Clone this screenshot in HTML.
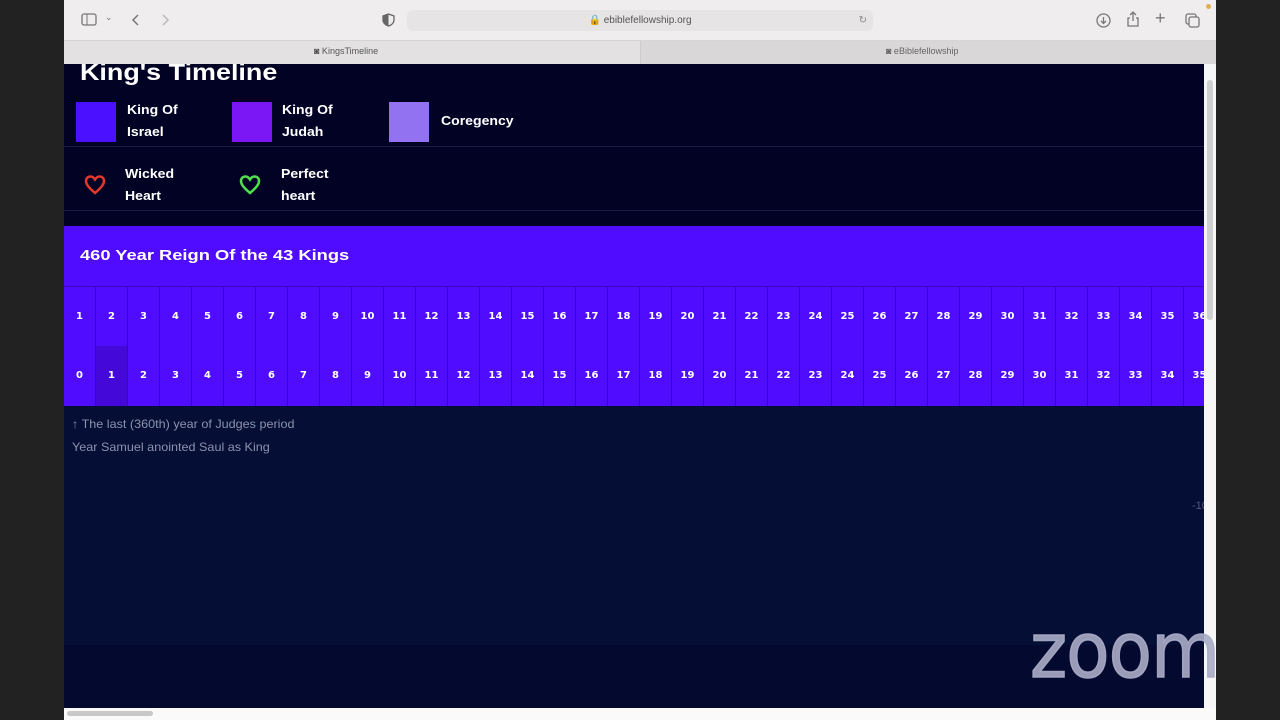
<!DOCTYPE html>
<html><head><meta charset="utf-8"><style>
*{margin:0;padding:0;box-sizing:border-box}
body{width:1280px;height:720px;background:#222;position:relative;overflow:hidden;font-family:"Liberation Sans",sans-serif}
.win{position:absolute;left:64px;top:0;width:1152px;height:720px;background:#f3f1f1}
.toolbar{position:absolute;left:0;top:0;width:1152px;height:40px;background:#efeded}
.tabs{position:absolute;left:0;top:40px;width:1152px;height:24px;background:#e3e1e2;border-top:1px solid #d6d4d4}
.tab2{position:absolute;left:576px;top:0;width:576px;height:24px;background:#d9d7d8;border-left:1px solid #ccc}
.url{position:absolute;left:343px;top:10px;width:466px;height:21px;background:#e6e4e4;border-radius:6px;font-size:10px;color:#555;text-align:center;line-height:21px}
.content{position:absolute;left:0;top:64px;width:1140px;height:644px;background:#020324;overflow:hidden}
.sb{position:absolute;left:1140px;top:64px;width:12px;height:644px;background:#f6f6f6}
.sb i{position:absolute;left:3px;top:16px;width:6px;height:240px;background:#cfcfcf;border-radius:3px}
.bot{position:absolute;left:0;top:708px;width:1152px;height:12px;background:#fafafa}
.bot i{position:absolute;left:3px;top:3px;width:86px;height:5px;background:#c8c8c8;border-radius:3px}
.w{color:#fff;font-weight:bold;position:absolute;transform-origin:0 0}
.sq{position:absolute;width:40px;height:40px}
.lab{position:absolute;color:#fff;font-size:13px;font-weight:bold;line-height:22px;transform:scaleX(1.08);transform-origin:0 0}
.band{position:absolute;left:0;top:162px;width:1140px;height:60px;background:#4f0cff}
.row{position:absolute;left:0;width:1160px;height:60px;display:flex;background:#4f0cff}
.row div{width:32px;flex:none;height:60px;border-right:1px solid #3a08b8;color:#fff;font-size:10px;font-weight:bold;text-align:center;line-height:60px;font-family:"DejaVu Sans",sans-serif}
.lower{position:absolute;left:0;top:342px;width:1140px;height:302px;background:#050e35}
.lower2{position:absolute;left:0;top:581px;width:1140px;height:63px;background:#040930}
.note{position:absolute;left:8px;color:#8c92ad;font-size:12px;transform:scaleX(1.05);transform-origin:0 0}
.zoom{position:absolute;left:1030px;top:613px;color:rgba(170,172,198,0.9);font-size:77px;letter-spacing:-1px;line-height:77px;font-family:"DejaVu Sans",sans-serif;transform:scaleX(0.92);transform-origin:0 0;-webkit-text-stroke:1.5px rgba(170,172,198,0.9)}
</style></head><body>
<div class="win">
<div class="toolbar">
<svg style="position:absolute;left:17px;top:13px" width="16" height="13"><rect x="1" y="1" width="14" height="11" rx="2" fill="none" stroke="#777" stroke-width="1.3"/><line x1="6" y1="1" x2="6" y2="12" stroke="#777"/></svg>
<span style="position:absolute;left:41px;top:12px;font-size:9px;color:#777">⌄</span>
<svg style="position:absolute;left:67px;top:13px" width="10" height="14"><path d="M7 2 L2 7 L7 12" fill="none" stroke="#777" stroke-width="1.5"/></svg>
<svg style="position:absolute;left:96px;top:13px" width="10" height="14"><path d="M3 2 L8 7 L3 12" fill="none" stroke="#bbb" stroke-width="1.5"/></svg>
<svg style="position:absolute;left:318px;top:13px" width="13" height="14"><path d="M6.5 1 L12 3 V7 C12 10 9 12.5 6.5 13 C4 12.5 1 10 1 7 V3 Z" fill="none" stroke="#666" stroke-width="1.3"/><path d="M6.5 1 V13 C4 12.5 1 10 1 7 V3 Z" fill="#666"/></svg>
<div class="url">🔒 ebiblefellowship.org<span style="position:absolute;right:6px;color:#888">↻</span></div>
<svg style="position:absolute;left:1032px;top:13px" width="15" height="15"><circle cx="7.5" cy="7.5" r="6.5" fill="none" stroke="#777" stroke-width="1.3"/><path d="M7.5 4 V10 M5 8 L7.5 10.5 L10 8" fill="none" stroke="#777" stroke-width="1.3"/></svg>
<svg style="position:absolute;left:1062px;top:11px" width="14" height="17"><path d="M7 1 V10 M4 4 L7 1 L10 4 M4 7 H2 V15 H12 V7 H10" fill="none" stroke="#777" stroke-width="1.3"/></svg>
<span style="position:absolute;left:1091px;top:8px;font-size:18px;color:#777">+</span>
<svg style="position:absolute;left:1121px;top:13px" width="15" height="15"><rect x="1" y="1" width="10" height="10" rx="2" fill="none" stroke="#777" stroke-width="1.3"/><rect x="4" y="4" width="10" height="10" rx="2" fill="#efeded" stroke="#777" stroke-width="1.3"/></svg>
<div style="position:absolute;left:1142px;top:4px;width:5px;height:5px;border-radius:50%;background:#e0b050"></div>
</div>
<div class="tabs">
<span style="position:absolute;left:250px;top:5px;font-size:9px;color:#555">◙ KingsTimeline</span>
<div class="tab2"><span style="position:absolute;left:245px;top:5px;font-size:9px;color:#666">◙ eBiblefellowship</span></div>
</div>
<div class="content">
<div class="w" style="left:16px;top:-5px;font-size:23px;transform:scaleX(1.17)">King's Timeline</div>
<div class="sq" style="left:12px;top:38px;background:#4a10ff"></div>
<div class="lab" style="left:63px;top:35px">King Of<br>Israel</div>
<div class="sq" style="left:168px;top:38px;background:#7b16f5"></div>
<div class="lab" style="left:218px;top:35px">King Of<br>Judah</div>
<div class="sq" style="left:325px;top:38px;background:#9272f0"></div>
<div class="lab" style="left:377px;top:46px">Coregency</div>
<div style="position:absolute;left:0;top:82px;width:1140px;height:1px;background:#1a1d44"></div>
<svg style="position:absolute;left:20px;top:111px" width="22" height="20"><path d="M11 18 C4 12 2 9 2 6 C2 3 4 1.5 6.5 1.5 C8.5 1.5 10 3 11 4.5 C12 3 13.5 1.5 15.5 1.5 C18 1.5 20 3 20 6 C20 9 18 12 11 18Z" fill="none" stroke="#e0392b" stroke-width="2.5"/></svg>
<div class="lab" style="left:61px;top:99px">Wicked<br>Heart</div>
<svg style="position:absolute;left:175px;top:111px" width="22" height="20"><path d="M11 18 C4 12 2 9 2 6 C2 3 4 1.5 6.5 1.5 C8.5 1.5 10 3 11 4.5 C12 3 13.5 1.5 15.5 1.5 C18 1.5 20 3 20 6 C20 9 18 12 11 18Z" fill="none" stroke="#4ee04e" stroke-width="2.5"/></svg>
<div class="lab" style="left:217px;top:99px">Perfect<br>heart</div>
<div style="position:absolute;left:0;top:146px;width:1140px;height:1px;background:#1a1d44"></div>
<div class="band"><div class="w" style="left:16px;top:21px;font-size:15px;transform:scaleX(1.22)">460 Year Reign Of the 43 Kings</div></div>
<div class="row" style="top:222px;border-top:1px solid #3a08b8">
<div>1</div><div>2</div><div>3</div><div>4</div><div>5</div><div>6</div><div>7</div><div>8</div><div>9</div><div>10</div><div>11</div><div>12</div><div>13</div><div>14</div><div>15</div><div>16</div><div>17</div><div>18</div><div>19</div><div>20</div><div>21</div><div>22</div><div>23</div><div>24</div><div>25</div><div>26</div><div>27</div><div>28</div><div>29</div><div>30</div><div>31</div><div>32</div><div>33</div><div>34</div><div>35</div><div>36</div>
</div>
<div class="row" style="top:282px">
<div>0</div><div style="background:#4409d8">1</div><div>2</div><div>3</div><div>4</div><div>5</div><div>6</div><div>7</div><div>8</div><div>9</div><div>10</div><div>11</div><div>12</div><div>13</div><div>14</div><div>15</div><div>16</div><div>17</div><div>18</div><div>19</div><div>20</div><div>21</div><div>22</div><div>23</div><div>24</div><div>25</div><div>26</div><div>27</div><div>28</div><div>29</div><div>30</div><div>31</div><div>32</div><div>33</div><div>34</div><div>35</div>
</div>
<div class="lower"></div>
<div class="lower2"></div>
<div class="note" style="top:353px">↑ The last (360th) year of Judges period</div>
<div class="note" style="top:376px">Year Samuel anointed Saul as King</div>
<div style="position:absolute;left:1128px;top:436px;color:#555a80;font-size:11px">-10</div>
</div>
<div class="sb"><i></i></div>
<div class="bot"><i></i></div>
</div>
<div class="zoom">zoom</div>
</body></html>
